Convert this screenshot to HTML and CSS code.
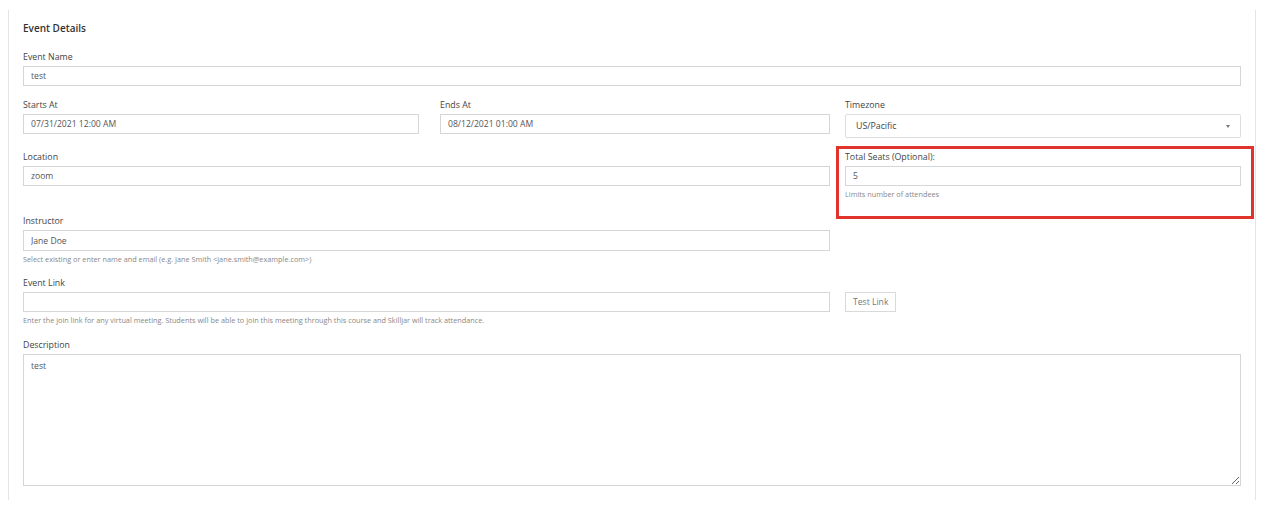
FILE: index.html
```html
<!DOCTYPE html>
<html lang="en">
<head>
    <meta charset="UTF-8">
    <meta name="viewport" content="width=device-width, initial-scale=1.0">
    <title>Event Details</title>
    <link rel="stylesheet" href="styles.css">
</head>
<body>
    <div class="panel">
        <h3 class="title">Event Details</h3>

        <div class="field first">
            <label class="label">Event Name</label>
            <input class="input" type="text" value="test">
        </div>

        <div class="row">
            <div class="field top">
                <label class="label">Starts At</label>
                <input class="input" type="text" value="07/31/2021 12:00 AM">
            </div>
            <div class="field top ends">
                <label class="label">Ends At</label>
                <input class="input" type="text" value="08/12/2021 01:00 AM">
            </div>
            <div class="field top">
                <label class="label">Timezone</label>
                <div class="select">
                    <span>US/Pacific</span>
                    <span class="caret"></span>
                </div>
            </div>

            <div class="field wide">
                <label class="label">Location</label>
                <input class="input" type="text" value="zoom">
            </div>
            <div class="field marked">
                <label class="label">Total Seats (Optional):</label>
                <input class="input" type="text" value="5">
                <p class="help">Limits number of attendees</p>
            </div>

            <div class="field wide instructor">
                <label class="label">Instructor</label>
                <input class="input tall" type="text" value="Jane Doe">
                <p class="help">Select existing or enter name and email (e.g. Jane Smith &lt;jane.smith@example.com&gt;)</p>
            </div>
            <div></div>

            <div class="field wide link">
                <label class="label">Event Link</label>
                <input class="input" type="text" value="">
                <p class="help nowrap">Enter the join link for any virtual meeting. Students will be able to join this meeting through this course and Skilljar will track attendance.</p>
            </div>
            <div class="field link">
                <label class="label">&nbsp;</label>
                <button class="btn" type="button">Test Link</button>
            </div>
        </div>

        <div class="field">
            <label class="label">Description</label>
            <textarea class="textarea">test</textarea>
        </div>
    </div>
</body>
</html>
```

FILE: styles.css
```css
* {
    margin: 0;
    padding: 0;
    box-sizing: border-box;
}

body {
    background: #fff;
    font-family: "Open Sans", "Liberation Sans", sans-serif;
    color: #444;
}

.panel {
    margin: 10px 0 0 8px;
    width: 1248px;
    height: 490px;
    border-left: 1px solid #e4e4e4;
    border-right: 1px solid #e4e4e4;
    padding: 11px 14px 0 14px;
}

.title {
    font-size: 10px;
    font-weight: 600;
    line-height: 14px;
    color: #333;
    margin-bottom: 16px;
}

.field {
    margin-bottom: 13px;
    min-width: 0;
}

.label {
    display: block;
    font-size: 8.8px;
    line-height: 12px;
    color: #444;
    margin-bottom: 3px;
}

.input {
    display: block;
    width: 100%;
    height: 20px;
    border: 1px solid #d6d6d6;
    padding: 0 7px;
    font-family: inherit;
    font-size: 8.6px;
    color: #555;
    background: #fff;
    outline: none;
}

.input.tall {
    height: 21px;
}

.row {
    display: grid;
    grid-template-columns: 396px 396px 396px;
    column-gap: 15px;
}

.row .field {
    margin-bottom: 16px;
}

.row .field.top {
    margin-bottom: 13px;
}

.row .field.instructor {
    margin-bottom: 13px;
}

.row .field.link {
    margin-bottom: 14px;
}

.wide {
    grid-column: span 2;
}

.ends {
    padding-left: 6px;
}

.select {
    display: flex;
    align-items: center;
    justify-content: space-between;
    height: 24px;
    border: 1px solid #ddd;
    border-radius: 2px;
    padding: 0 10px;
    font-size: 8.8px;
    color: #444;
}

.caret {
    width: 0;
    height: 0;
    border-left: 2.5px solid transparent;
    border-right: 2.5px solid transparent;
    border-top: 3px solid #777;
}

.help {
    font-size: 7.3px;
    line-height: 10px;
    color: #888;
    margin-top: 3px;
}

.nowrap {
    white-space: nowrap;
}

.marked {
    position: relative;
}

.marked::after {
    content: "";
    position: absolute;
    top: -5px;
    left: -9px;
    right: -13px;
    bottom: -20px;
    border: 3px solid #e0332c;
    pointer-events: none;
}

.btn {
    display: block;
    height: 20px;
    padding: 0 7px;
    border: 1px solid #d9d9d9;
    background: #fff;
    font-family: inherit;
    font-size: 8.6px;
    color: #777;
}

.textarea {
    display: block;
    width: 100%;
    height: 132px;
    border: 1px solid #d6d6d6;
    padding: 5px 7px;
    font-family: inherit;
    font-size: 8.6px;
    color: #555;
    resize: both;
    outline: none;
}
```
